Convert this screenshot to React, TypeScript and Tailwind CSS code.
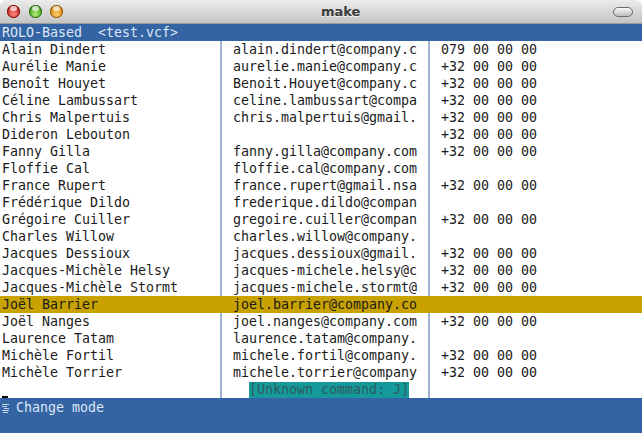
import React from 'react';

type Contact = { name: string; email: string; phone: string };

const contacts: Contact[] = [
  { name: 'Alain Dindert', email: 'alain.dindert@company.c', phone: '079 00 00 00' },
  { name: 'Aurélie Manie', email: 'aurelie.manie@company.c', phone: '+32 00 00 00' },
  { name: 'Benoît Houyet', email: 'Benoit.Houyet@company.c', phone: '+32 00 00 00' },
  { name: 'Céline Lambussart', email: 'celine.lambussart@compa', phone: '+32 00 00 00' },
  { name: 'Chris Malpertuis', email: 'chris.malpertuis@gmail.', phone: '+32 00 00 00' },
  { name: 'Dideron Lebouton', email: '', phone: '+32 00 00 00' },
  { name: 'Fanny Gilla', email: 'fanny.gilla@company.com', phone: '+32 00 00 00' },
  { name: 'Floffie Cal', email: 'floffie.cal@company.com', phone: '' },
  { name: 'France Rupert', email: 'france.rupert@gmail.nsa', phone: '+32 00 00 00' },
  { name: 'Frédérique Dildo', email: 'frederique.dildo@compan', phone: '' },
  { name: 'Grégoire Cuiller', email: 'gregoire.cuiller@compan', phone: '+32 00 00 00' },
  { name: 'Charles Willow', email: 'charles.willow@company.', phone: '' },
  { name: 'Jacques Dessioux', email: 'jacques.dessioux@gmail.', phone: '+32 00 00 00' },
  { name: 'Jacques-Michèle Helsy', email: 'jacques-michele.helsy@c', phone: '+32 00 00 00' },
  { name: 'Jacques-Michèle Stormt', email: 'jacques-michele.stormt@', phone: '+32 00 00 00' },
  { name: 'Joël Barrier', email: 'joel.barrier@company.co', phone: '' },
  { name: 'Joël Nanges', email: 'joel.nanges@company.com', phone: '+32 00 00 00' },
  { name: 'Laurence Tatam', email: 'laurence.tatam@company.', phone: '' },
  { name: 'Michèle Fortil', email: 'michele.fortil@company.', phone: '+32 00 00 00' },
  { name: 'Michèle Torrier', email: 'michele.torrier@company', phone: '+32 00 00 00' },
];

const SELECTED = 15;

const mono = { fontFamily: '"DejaVu Sans Mono", "Liberation Mono", monospace' };

const Light = ({ from, to, ring }: { from: string; to: string; ring: string }) => (
  <div
    className="relative h-[13px] w-[13px] rounded-full"
    style={{ background: `radial-gradient(circle at 50% 70%, ${to} 0%, ${from} 75%)`, boxShadow: `inset 0 0 0 1px ${ring}` }}
  >
    <div className="absolute left-[3px] top-[1px] h-[5px] w-[7px] rounded-full bg-white/70" />
  </div>
);

export default function App() {
  return (
    <div className="flex h-[433px] w-[642px] flex-col overflow-hidden bg-white" style={mono}>
      {/* Title bar */}
      <div className="relative flex h-[24px] shrink-0 items-center rounded-t-[6px] border-b border-[#9a9a9a] bg-gradient-to-b from-[#ececec] to-[#c4c4c4] pl-[7px] pr-[5px]">
        <div className="flex gap-[8.5px]">
          <Light from="#b81414" to="#ff8a80" ring="#7a1010" />
          <Light from="#2f8f10" to="#b6f07a" ring="#2a6a10" />
          <Light from="#d07800" to="#ffd070" ring="#8a5a00" />
        </div>
        <div
          className="ml-[258px] text-[13px] font-bold text-[#3a3a3a]"
          style={{ fontFamily: '"DejaVu Sans", "Liberation Sans", sans-serif', textShadow: '0 1px 0 #f4f4f4' }}
        >
          make
        </div>
        <div className="ml-auto mr-[4px] h-[10px] w-[20px] rounded-full border border-[#6e6e6e] bg-gradient-to-b from-[#f8f8f8] to-[#bdbdbd]" />
      </div>

      {/* Header */}
      <div className="flex h-[17px] shrink-0 items-center bg-[#3464a4] pl-[2px] text-[13.3px] leading-[17px] text-[#dce6f4]">
        <span className="whitespace-pre">ROLO-Based  &lt;test.vcf&gt;</span>
      </div>

      {/* Rows */}
      <div className="flex flex-col text-[13.3px] leading-[17px] text-[#1a1a1a]">
        {contacts.map((c, i) => {
          const sel = i === SELECTED;
          return (
            <div key={c.name} className={`flex h-[17px] ${sel ? 'bg-[#c8a200]' : ''}`}>
              <div className={`w-[222px] shrink-0 overflow-hidden whitespace-nowrap border-r-2 pl-[2px] ${sel ? 'border-[#c8a200]' : 'border-[#9fb3d2]'}`}>
                {c.name}
              </div>
              <div className={`w-[208px] shrink-0 overflow-hidden whitespace-nowrap border-r-2 pl-[11px] ${sel ? 'border-[#c8a200]' : 'border-[#9fb3d2]'}`}>
                {c.email}
              </div>
              <div className="flex-1 whitespace-nowrap pl-[11px]">{c.phone}</div>
            </div>
          );
        })}
        {/* Message row */}
        <div className="flex h-[17px]">
          <div className="flex w-[222px] shrink-0 items-end border-r-2 border-[#9fb3d2] pl-[2px]">
            <div className="h-[2px] w-[6px] bg-black" />
          </div>
          <div className="w-[208px] shrink-0 whitespace-nowrap border-r-2 border-[#9fb3d2] pl-[27px]">
            <span className="inline-block h-[16px] bg-[#16999b] leading-[16px] text-[#2c5c60]">[Unknown command: J]</span>
          </div>
          <div className="flex-1" />
        </div>
      </div>

      {/* Bottom bar */}
      <div className="flex flex-1 items-start gap-[7px] bg-[#3464a4] pl-[2px] pt-[1px] text-[13.3px] leading-[17px] text-[#dce6f4]">
        <svg width="7" height="9" viewBox="0 0 7 9" className="mt-[5px]">
          <rect x="0" y="0" width="7" height="1" fill="#c8d6ea" />
          <rect x="0" y="2" width="5" height="1" fill="#c8d6ea" />
          <rect x="2" y="4" width="5" height="1" fill="#c8d6ea" />
          <rect x="0" y="6" width="7" height="1" fill="#c8d6ea" />
          <rect x="1" y="8" width="5" height="1" fill="#c8d6ea" />
        </svg>
        <span>Change mode</span>
      </div>
    </div>
  );
}
